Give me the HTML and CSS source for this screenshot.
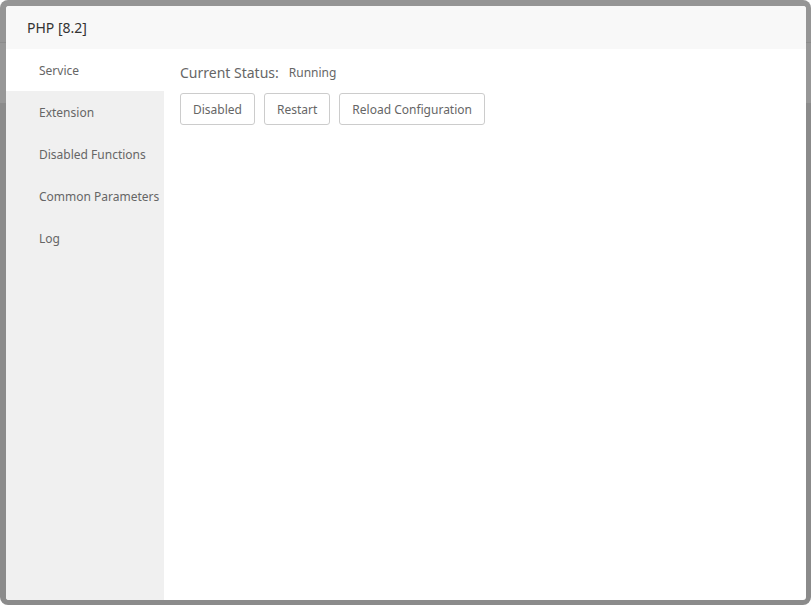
FILE: index.html
```html
<!DOCTYPE html>
<html lang="en">
<head>
  <meta charset="UTF-8" />
  <meta name="viewport" content="width=device-width, initial-scale=1.0"/>
  <title>PHP [8.2]</title>
  <link rel="stylesheet" href="styles.css">
</head>
<body>
  <div class="overlay">
    <div class="dialog" role="dialog" aria-labelledby="dialog-title">
      <h1 class="dialog-title" id="dialog-title">PHP [8.2]</h1>
      <div class="dialog-body">
        <nav class="menu">
          <a class="menu-item active" href="#service">Service</a>
          <a class="menu-item" href="#extension">Extension</a>
          <a class="menu-item" href="#disabled-functions">Disabled Functions</a>
          <a class="menu-item" href="#common-parameters">Common Parameters</a>
          <a class="menu-item" href="#log">Log</a>
        </nav>
        <main class="content" id="service">
          <p class="status">Current Status: <span class="status-value">Running</span></p>
          <div class="actions">
            <button type="button" class="btn">Disabled</button>
            <button type="button" class="btn">Restart</button>
            <button type="button" class="btn">Reload Configuration</button>
          </div>
        </main>
      </div>
    </div>
  </div>
</body>
</html>
```
FILE: styles.css
```css
* {
  box-sizing: border-box;
}
body {
  margin: 0;
  background: #fff;
  color: #666;
  font-family: "Noto Sans", "Open Sans", sans-serif;
  font-size: 12px;
}
.overlay {
  display: flex;
  min-height: 100vh;
  padding: 6px 5px 5px 6px;
  border-radius: 8px;
  background: linear-gradient(#959595 42px, #8b8b8b 42px, #8b8b8b 43px, #979797 43px, #979797 103px, #8b8b8b 103px);
}
.dialog {
  flex: 1;
  display: flex;
  flex-direction: column;
  border-radius: 3px;
  overflow: hidden;
  background: #fff;
}
.dialog-title {
  margin: 0;
  padding: 0 21px;
  background: #f8f8f8;
  color: #333;
  font-size: 14px;
  font-weight: 400;
  line-height: 43px;
}
.dialog-body {
  flex: 1;
  display: flex;
}
.menu {
  flex: none;
  width: 158px;
  background: #f0f0f0;
}
.menu-item {
  display: block;
  padding: 2px 0 0 33px;
  color: #666;
  line-height: 40px;
  white-space: nowrap;
  text-decoration: none;
}
.menu-item.active {
  background: #fff;
}
.content {
  flex: 1;
  padding: 12px 16px;
}
.status {
  display: flex;
  gap: 10px;
  margin: 0 0 8px;
  font-size: 14px;
  line-height: 24px;
}
.status-value {
  font-size: 12px;
}
.actions {
  display: flex;
  flex-wrap: wrap;
  gap: 9px;
}
.btn {
  height: 32px;
  padding: 0 12px;
  border: 1px solid #ccc;
  border-radius: 3px;
  background: #fff;
  color: #666;
  font: inherit;
  cursor: pointer;
}
.btn:hover {
  background: #f5f5f5;
}
```
